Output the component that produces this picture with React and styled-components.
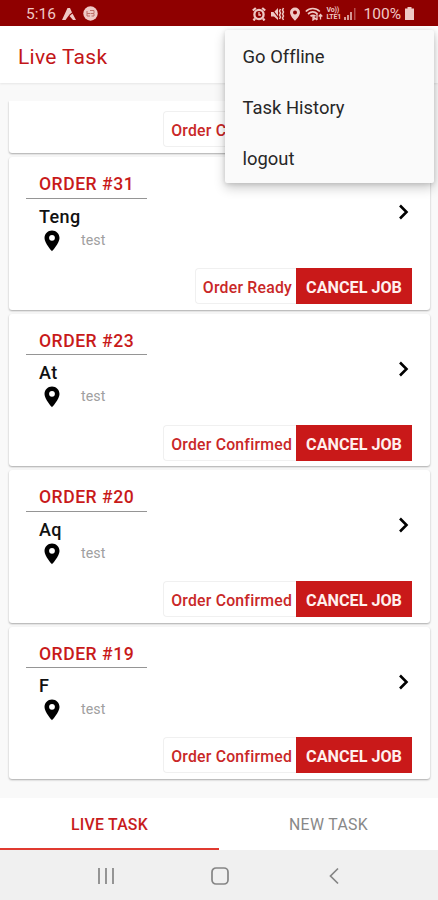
import React from 'react';
import styled, { createGlobalStyle } from 'styled-components';

const GlobalStyle = createGlobalStyle`
  * {
    box-sizing: border-box;
  }
  body {
    margin: 0;
    background: #f9f9f9;
    font-family: Roboto, 'Liberation Sans', sans-serif;
  }
`;

const Screen = styled.div`
  position: relative;
  display: flex;
  flex-direction: column;
  width: 438px;
  height: 900px;
  overflow: hidden;
  background: #f9f9f9;
`;

const StatusBar = styled.header`
  display: flex;
  flex: none;
  justify-content: space-between;
  align-items: center;
  height: 25.5px;
  padding: 2px 24px 0 26px;
  background: #8f0000;
  color: #efc9c5;
`;
const StatusGroup = styled.div`
  display: flex;
  align-items: center;
  gap: ${({ $gap }) => $gap}px;

  svg {
    display: block;
    flex: none;
  }
`;
const StatusText = styled.span`
  font-size: 15.5px;
  line-height: 20px;
  margin-left: ${({ $left }) => $left || 0}px;
`;

const AppBar = styled.div`
  flex: none;
  height: 57.5px;
  padding: 18px 18px 0;
  background: #fff;
  box-shadow: 0 1px 2px rgba(0, 0, 0, 0.08);
`;
const Title = styled.h1`
  margin: 0;
  font-size: 21px;
  font-weight: 400;
  line-height: 26px;
  letter-spacing: 0.3px;
  color: #c31618;
`;

const TaskList = styled.main`
  display: flex;
  flex: none;
  flex-direction: column;
  justify-content: flex-end;
  gap: 4px;
  height: 682px;
  margin-top: 18px;
  padding: 0 8px 4px 9px;
  overflow: hidden;
`;
const Card = styled.article`
  display: flex;
  flex: none;
  flex-direction: column;
  justify-content: space-between;
  height: ${({ $scrolled }) => ($scrolled ? 52.4 : 152.4)}px;
  padding: ${({ $scrolled }) => ($scrolled ? 10.4 : 16)}px 18px 5.6px 17px;
  border-radius: ${({ $scrolled }) => ($scrolled ? '0 0 3px 3px' : '3px')};
  background: #fff;
  box-shadow: 0 1px 2px rgba(0, 0, 0, 0.32);
`;
const CardTop = styled.div`
  display: flex;
  justify-content: space-between;
`;
const OrderNumber = styled.h2`
  width: 121px;
  height: 25.5px;
  margin: 0;
  padding-left: 13px;
  border-bottom: 1px solid #959595;
  font-size: 17.6px;
  font-weight: 500;
  line-height: 23px;
  letter-spacing: 0.5px;
  white-space: nowrap;
  color: #c81a1a;
`;
const Customer = styled.div`
  margin-top: 7px;
  padding-left: 13px;
  font-size: 18px;
  font-weight: 500;
  line-height: 22px;
  letter-spacing: 0.4px;
  color: #111;
`;
const Address = styled.div`
  display: flex;
  gap: 17px;
  margin-top: 1px;
  padding-left: 14px;
  font-size: 14.2px;
  line-height: 22px;
  letter-spacing: 0.1px;
  color: #a0a0a0;

  svg {
    display: block;
  }
`;
const Arrow = styled.svg`
  flex: none;
  margin: 31px 2px 0 0;
`;
const CardActions = styled.div`
  display: flex;
  justify-content: flex-end;
`;
const OrderStatus = styled.span`
  height: 36px;
  padding: 0 4px 0 7px;
  border: 1px solid #f0f0f0;
  border-right: 0;
  border-radius: 4px 0 0 4px;
  font-size: 15.8px;
  font-weight: 500;
  line-height: 37px;
  letter-spacing: 0.22px;
  white-space: nowrap;
  color: #c92727;
`;
const CancelButton = styled.button`
  width: 116px;
  height: 36px;
  padding: 3px 0 0;
  border: 0;
  background: #c91919;
  font: 700 16.2px/33px Roboto, 'Liberation Sans', sans-serif;
  white-space: nowrap;
  color: #fff0ee;
`;

const Tabs = styled.nav`
  display: flex;
  flex: none;
  height: 51.5px;
  margin-top: 15px;
  background: #fff;
`;
const Tab = styled.a`
  flex: 1;
  border-bottom: 2px solid ${({ $active }) => ($active ? '#e03a30' : 'transparent')};
  font-size: 15.8px;
  font-weight: ${({ $active }) => ($active ? 500 : 400)};
  line-height: 54px;
  letter-spacing: ${({ $active }) => ($active ? 0.25 : 0.35)}px;
  text-align: center;
  color: ${({ $active }) => ($active ? '#c71c1c' : '#888')};
`;

const SystemNav = styled.footer`
  display: flex;
  flex: 1;
  justify-content: space-between;
  align-items: center;
  padding: 2px 94px 0 96px;
  background: #f0f0f0;

  svg {
    fill: none;
    stroke: #858585;
    stroke-width: 1.7;
  }
`;

const Menu = styled.div`
  position: absolute;
  top: 30px;
  right: 4px;
  width: 209px;
  height: 153px;
  padding-top: 1px;
  border-radius: 2px;
  background: #fafafa;
  box-shadow: 0 5px 12px rgba(0, 0, 0, 0.2), 0 1px 5px rgba(0, 0, 0, 0.14);
`;
const MenuItem = styled.div`
  height: 51px;
  padding-left: 17.5px;
  font-size: 18.4px;
  line-height: 52px;
  letter-spacing: 0.02px;
  color: #272727;
`;

const VoLte = styled.span`
  display: flex;
  flex-direction: column;
  width: 16px;
  font-size: 7px;
  font-weight: 700;
  line-height: 6.5px;
  letter-spacing: -0.2px;
  white-space: nowrap;
`;
const SignalIcon = styled.svg`
  margin-left: -3px;
`;

const PinIcon = () => (
  <svg width="24" height="24" viewBox="0 0 24 24" fill="#000">
    <path d="M12 1.500C7.800 1.500 4.500 4.800 4.500 9c0 5.300 7.500 13.200 7.500 13.200S19.500 14.300 19.500 9c0-4.200-3.300-7.500-7.500-7.500zm0 10.200a2.900 2.900 0 1 1 0-5.800 2.900 2.900 0 0 1 0 5.800z" />
  </svg>
);

const StatusIcons = () => (
  <>
    {/* alarm */}
    <svg width="14" height="14" viewBox="0 0 14 14" fill="none" stroke="currentColor">
      <circle cx="7" cy="7.500" r="4.600" strokeWidth="2.300" />
      <path d="M7 5v3h2" strokeWidth="1.300" />
      <path d="M.8 3.500 3.800 1M13.200 3.500 10.200 1M3 11.500l-1.500 2M11 11.500l1.500 2" strokeWidth="2.200" />
    </svg>
    {/* vibrate */}
    <svg width="15" height="14" viewBox="0 0 15 14">
      <path d="M1 5h3l4-4v12L4 9.500H1z" fill="currentColor" />
      <path d="M1 1l9 11.500" stroke="#8f0000" strokeWidth="1.200" />
      <path d="M10.500 2l-1 2 1 2-1 2 1 2-1 2M13.500 1l-1 2 1 2-1 2 1 2-1 2 1 2" fill="none" stroke="currentColor" strokeWidth="1.500" />
    </svg>
    {/* location */}
    <svg width="12" height="14" viewBox="0 0 12 14">
      <path fill="currentColor" fillRule="evenodd" d="M6 .5A5 5 0 0 0 1 5.500C1 9 6 13.700 6 13.700S11 9 11 5.500a5 5 0 0 0-5-5zm0 7a2 2 0 1 1 0-4 2 2 0 0 1 0 4z" />
    </svg>
    {/* wifi */}
    <svg width="18" height="14" viewBox="0 0 18 14" fill="none" stroke="currentColor" strokeWidth="1.700">
      <path d="M.8 4.500C4.800.5 10.800.5 14.800 4.500M3 7c3-2.700 6.500-2.700 9.500 0M5.500 9.300c1.700-1.300 3.300-1.300 5 0" />
      <path d="M8 9.500l2 2-2 1.500zM12 7v6m-2-2 2 2M15.500 12.500v-5m-1.800 2 1.800-2 1.800 2" strokeWidth="1.300" />
    </svg>
  </>
);

// the first card is already scrolled half out of the list
const orders = [
  { id: 34, status: 'Order Confirmed', scrolled: true },
  { id: 31, name: 'Teng', status: 'Order Ready' },
  { id: 23, name: 'At', status: 'Order Confirmed' },
  { id: 20, name: 'Aq', status: 'Order Confirmed' },
  { id: 19, name: 'F', status: 'Order Confirmed' },
];

const OrderCard = ({ order }) => (
  <Card $scrolled={order.scrolled}>
    {!order.scrolled && (
      <CardTop>
        <div>
          <OrderNumber>ORDER #{order.id}</OrderNumber>
          <Customer>{order.name}</Customer>
          <Address>
            <PinIcon />
            test
          </Address>
        </div>
        <Arrow width="12" height="16" viewBox="0 0 12 16" fill="none" stroke="#000" strokeWidth="2.600">
          <path d="M2 1.500 8.500 8 2 14.500" />
        </Arrow>
      </CardTop>
    )}
    <CardActions>
      <OrderStatus>{order.status}</OrderStatus>
      <CancelButton>CANCEL JOB</CancelButton>
    </CardActions>
  </Card>
);

const App = () => {
  return (
    <Screen>
      <GlobalStyle />
      <StatusBar>
        <StatusGroup $gap={6.5}>
          <StatusText>5:16</StatusText>
          <svg width="14" height="12" viewBox="0 0 14 12" fill="currentColor">
            <path d="M5.500 0H8l2 4.500-2.500 2L3.500 12H0z" />
            <path d="M10.500 5.500 14 12h-3L7.500 8z" />
          </svg>
          <svg width="15" height="15" viewBox="0 0 15 15">
            <circle cx="7.500" cy="7.500" r="7.200" fill="currentColor" />
            <path d="M4 5v5h3M4 7.500h3.500M7 4.500h4v3H8M8.500 10H11V8" fill="none" stroke="#bd6f69" strokeWidth="1" />
          </svg>
        </StatusGroup>
        <StatusGroup $gap={4}>
          <StatusIcons />
          <VoLte>
            <span>Vo))</span>
            <span>LTE1</span>
          </VoLte>
          <SignalIcon width="12" height="12" viewBox="0 0 12 12" fill="currentColor">
            <path d="M0 9h2v3H0zM3 7h2v5H3zM6 4h2v8H6z" opacity=".75" />
            <path d="M10 0h1.500v12H10z" opacity=".4" />
          </SignalIcon>
          <StatusText $left={4}>100%</StatusText>
          <svg width="9" height="13" viewBox="0 0 9 13" fill="currentColor">
            <path d="M2.500 0h4v1.500H9V13H0V1.500h2.500z" />
          </svg>
        </StatusGroup>
      </StatusBar>
      <AppBar>
        <Title>Live Task</Title>
      </AppBar>
      <TaskList>
        {orders.map((order) => (
          <OrderCard key={order.id} order={order} />
        ))}
      </TaskList>
      <Tabs>
        <Tab $active>LIVE TASK</Tab>
        <Tab>NEW TASK</Tab>
      </Tabs>
      <SystemNav>
        <svg width="20" height="20" viewBox="0 0 20 20">
          <path d="M3 2v16M10 2v16M17 2v16" />
        </svg>
        <svg width="20" height="20" viewBox="0 0 20 20">
          <rect x="2" y="2" width="16" height="16" rx="4" />
        </svg>
        <svg width="20" height="20" viewBox="0 0 20 20">
          <path d="M14 2.500 6.500 10l7.500 7.500" />
        </svg>
      </SystemNav>
      <Menu>
        <MenuItem>Go Offline</MenuItem>
        <MenuItem>Task History</MenuItem>
        <MenuItem>logout</MenuItem>
      </Menu>
    </Screen>
  );
};

export default App;
